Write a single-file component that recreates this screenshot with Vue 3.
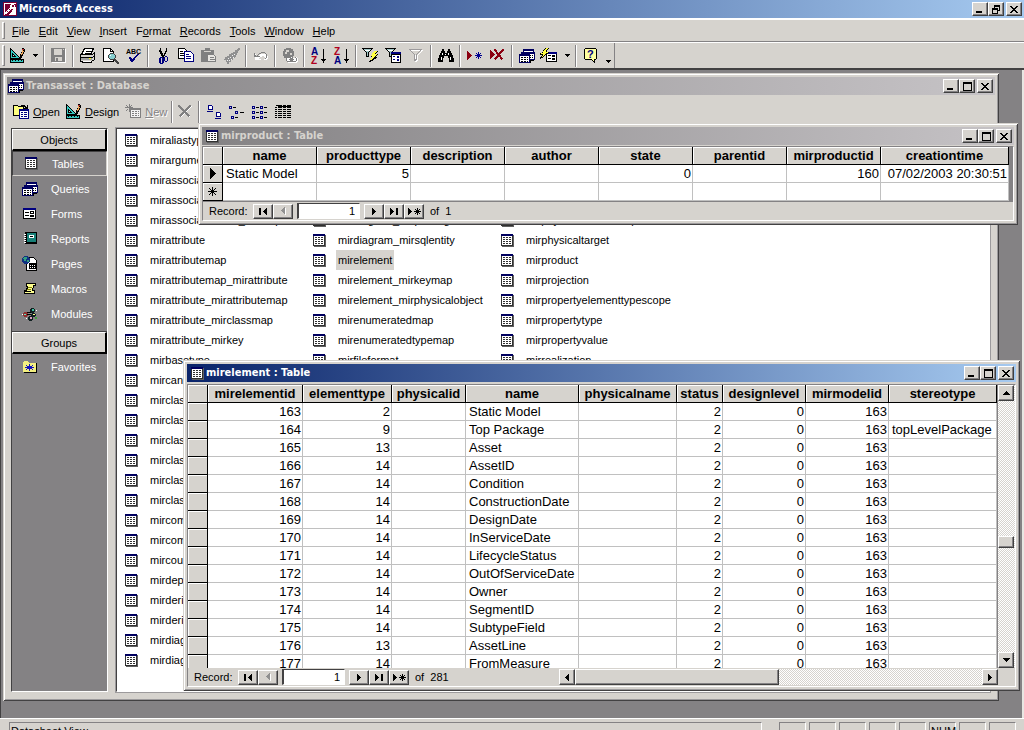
<script setup>
import { h } from 'vue'

const palette = {
  k: '#000000', w: '#ffffff', n: '#000060', d: '#303030', s: '#606060'
}

const tablePixels = [
  'nnnnnnnnnnnn.',
  'nnnnnnnnnnnns',
  'dwwwwwwwwwwds',
  'dwddwddwddwds',
  'dwwwwwwwwwwds',
  'dwddwddwddwds',
  'dwwwwwwwwwwds',
  'dwddwddwddwds',
  'dwwwwwwwwwwds',
  'dwddwddwddwds',
  'dwwwwwwwwwwds',
  'dddddddddddds',
  '.ssssssssssss'
]

const windowsPixels = [
  '....nnnnnnnnnnn.',
  '....nnnnnnnnnnn.',
  '....nwwwwwwwwwn.',
  '..nnnnnnnnnnnnnn',
  '..nnnnnnnnnnnnnn',
  'nnnnnnnnnnnwwwwn',
  'nnnnnnnnnnnkwkwn',
  'nwwwwwwwwwnwwwwn',
  'nwkkwkkwkwnkwkwn',
  'nwwwwwwwwwnwwwwn',
  'nwkkwkkwkwnnnnnn',
  'nwwwwwwwwwnkkkk.',
  'nwkkwkkwkwnk....',
  'nnnnnnnnnnnk....'
]

const icons = {
  table: { w: 13, h: 13, px: tablePixels },
  windows: { w: 16, h: 14, px: windowsPixels },
  key: {
    w: 14, h: 14,
    p: [['M0 0H14V14H0Z', '#7b0033'], ['M1 1H13V13H1Z', '#fff'], ['M2 2H13V4L6 13H2Z', '#7b0033'],
      ['M8 2h3v1h1v3h-1v1h-3v1h-1v1h-1v1h-1v1h-1v1h-2v-2h1v-1h1v-1h1v-1h1v-1h1v-3h1z', '#fff'],
      ['M9 3h2v2h-2z', '#7b0033'], ['M6 7h1v1h-1zM4 9h1v1h-1z', '#7b0033']]
  },
  design: {
    w: 16, h: 15,
    p: [['M1 1V11H11Z', '#37c8c0', '#000'], ['M3 6V9H6Z', '#d6d3ce', '#000'],
      ['M0 11H14V15H0Z', '#000'], ['M1 12H13V14H1Z', '#37c8c0'],
      ['M2 12h1v1h-1zM5 12h1v1h-1zM8 12h1v1h-1zM11 12h1v1h-1z', '#000'],
      ['M12 0h2v1h1v3h-1v2h-1v2h-1v2h-2v-4h1v-2h1v-2z', '#000'],
      ['M12 2h1v1h1v1h-1v2h-1v1h-1v-2h1z', '#f0a858'], ['M12 1h2v1h-2z', '#c03030']]
  },
  save: {
    w: 15, h: 15,
    p: [['M1 1H15V15H1Z', '#fff'], ['M0 0H14V14H0Z', '#808080'], ['M3 1H11V7H3Z', '#d6d3ce'],
      ['M4 9H11V13H4Z', '#d6d3ce'], ['M5 10H7V13H5Z', '#808080'], ['M12 1h1v1h-1z', '#d6d3ce']]
  },
  print: {
    w: 16, h: 15,
    p: [['M5 1H14L11 7H2Z', '#fff', '#000'], ['M6 3h5v1h-5zM5 5h5v1h-5z', '#000'],
      ['M1 7H13L15 5V12L12 14H1Z', '#d6d3ce', '#000'], ['M0 9H13V10H0Z', '#000'],
      ['M1 10H12V12H1Z', '#a0a0a0'], ['M9 10h2v1h-2z', '#ffff00'], ['M2 13H12V15H2Z', '#000'], ['M3 13H11V14H3Z', '#fff'],
      ['M13 8h1v1h-1zM14 10h1v1h-1z', '#000']]
  },
  preview: {
    w: 16, h: 16,
    p: [['M1 1H8L11 4V14H1Z', '#fff', '#000'], ['M8 1V4H11', 'none', '#000'],
      ['M7 5h4v1h1v1h1v3h-1v1h-1v1h-4v-1h-1v-1h-1v-3h1v-1h1z', '#404040'],
      ['M7 6h4v1h1v3h-1v1h-4v-1h-1v-3h1z', '#86cfd0'], ['M7 7h1v1h-1z', '#fff'],
      ['M11 11h2v1h1v1h1v1h1v2h-2v-1h-1v-1h-1v-1h-1z', '#404040']]
  },
  spell: {
    w: 16, h: 16, p: [['M3 9h2v1h1v1h1v-1h1v-1h1v-1h1v-1h1v-1h2v1h-1v1h-1v1h-1v1h-1v2h-1v1h-1v1h-2v-1h-1v-2h-1z', '#000080']],
    t: [[0, 6, 7, '#000', 'ABC', 'bold']]
  },
  cut: {
    w: 10, h: 16,
    p: [['M2 0h1v3h1v2h1v2h1v-2h1v-2h1v-3h1v4h-1v2h-1v2h-1v2h-2v-2h-1v-2h-1v-2h-1z', '#000'],
      ['M2 9h3v1h1v5h-1v1h-3v-1h-1v-5h1zM3 10v5h1v-5zM7 8h2v1h1v4h-1v1h-2v-1h-1v-4h1zM7 9v4h2v-4z', '#000080']]
  },
  copy: {
    w: 16, h: 15,
    p: [['M1 1H7L9 3V11H1Z', '#fff', '#000'], ['M2 3h3v1h-3zM2 5h4v1h-4zM2 7h4v1h-4z', '#000'],
      ['M7 4H13L16 7V14H7Z', '#fff', '#000080'], ['M8 6h3v1h-3zM8 8h5v1h-5zM8 10h5v1h-5z', '#000080']]
  },
  paste: {
    w: 16, h: 15,
    p: [['M0 2H4V0H9V2H13V14H0Z', '#808080'], ['M3 3h7v1h-7z', '#d6d3ce'],
      ['M7 7H13L15 9V14H7Z', '#e8e6e2', '#808080'], ['M9 9h4v1h-4zM9 11h5v1h-5z', '#808080']]
  },
  brush: {
    w: 16, h: 16,
    p: [['M14 0h2v2h-1v1h-1v2h-1v2h-1v2h-1v1h-2v2h-2v2h-2v2h-2v-2h-1v-2h-2v-1h1v-2h2v-1h2v-2h2v-1h2v-1h2v-2h2z', '#909090'],
      ['M4 10h1v1h-1zM6 9h1v1h-1zM5 12h1v1h-1zM7 11h1v1h-1zM8 7h1v1h-1zM3 12h1v1h-1zM10 6h1v1h-1zM9 9h1v1h-1z', '#f0f0f0']]
  },
  undo: {
    w: 14, h: 10,
    p: [['M1 3v6h6v-1h-2v-1h1v-1h2v-1h2v1h1v2h-1v1h3v-1h1v-3h-1v-1h-1v-1h-6v1h-1v1h-1v1h-1v-1h-1v-2z', '#fff'],
      ['M0 2h1v2h1v1h1v-1h1v-1h1v-1h2v-1h4v1h1v1h1v4h-1v1h-1v-1h1v-4h-1v-1h-4v1h-2v1h-1v1h2v1h-6z', '#808080']]
  },
  globe: {
    w: 16, h: 16,
    p: [['M4 0h5v1h2v2h1v5h-1v2h-2v1h-5v-1h-2v-2h-1v-5h1v-2h2z', '#808080'], ['M4 2h3v2h-2v2h-2v-2h1zM8 5h2v2h-2z', '#d6d3ce'],
      ['M6 9h4v1h3v-1h2v1h1v4h-1v1h-9v-1h-1v-4h1z', '#fff'], ['M5 9h4v1h4v-1h1v1h1v3h-1v1h-9v-1h-1v-3h1zM5 10v3h3v-3zM11 10v3h3v-3z', '#808080'],
      ['M7 11h5v1h-5z', '#808080']]
  },
  az: { w: 16, h: 16, p: [['M12 1h1v10h2v1h-1v1h-1v2h-1v-2h-1v-1h-1v-1h2z', '#000']], t: [[0, 7, 10, '#000080', 'A', 'bold'], [0, 16, 10, '#b00020', 'Z', 'bold']] },
  za: { w: 16, h: 16, p: [['M12 1h1v10h2v1h-1v1h-1v2h-1v-2h-1v-1h-1v-1h2z', '#000']], t: [[0, 7, 10, '#b00020', 'Z', 'bold'], [0, 16, 10, '#000080', 'A', 'bold']] },
  filterBolt: {
    w: 17, h: 16,
    p: [['M1 1H11L7 5V9H5V5Z', '#9fc4c4', '#000'], ['M3 2h5v1h-5z', '#fff'],
      ['M12 3h4v1h-1v1h-1v1h2v1h-1v1h-1v1h1v1h-1v1h-2v1h-1v1h-2v1h-2v-1h1v-2h1v-1h1v-1h-1v-2h1v-2h1z', '#000'],
      ['M12 3h3v1h-1v1h-1v1h2v1h-1v1h-1v1h-1v1h-1v1h-1v1h-2v-1h1v-1h1v-2h-1v-1h1v-2h1z', '#ffff40']]
  },
  filterForm: {
    w: 17, h: 16,
    p: [['M1 1H11L7 5V9H5V5Z', '#9fc4c4', '#000'], ['M3 2h5v1h-5z', '#fff'], ['M6 4H16V15H6Z', '#000'], ['M6 4H16V6H6Z', '#000080'],
      ['M7 7H15V14H7Z', '#fff'], ['M8 8h2v1h-2zM8 11h2v1h-2zM12 8h2v2h-2zM12 11h2v2h-2z', '#000080']]
  },
  funnel: {
    w: 15, h: 14, p: [['M2 2H14L9 7V12L7 13V7Z', 'none', '#fff'], ['M1 1H13L8 6V11L6 12V6Z', 'none', '#9c9a9c']]
  },
  find: {
    w: 16, h: 15,
    p: [['M4 1h2v2h1v2h2v-2h1v-2h2v2h1v2h1v2h1v3h1v4h-5v-4h-1v-2h-4v2h-1v4h-5v-4h1v-3h1v-2h1v-2h1z', '#000'],
      ['M4 5h1v2h-1zM3 9h1v3h-1zM10 5h1v2h-1zM12 9h1v3h-1zM7 6h1v1h-1z', '#fff']]
  },
  newRecord: {
    w: 15, h: 11,
    p: [['M0 1h1v1h1v1h1v1h1v1h1v1h-1v1h-1v1h-1v1h-1v1h-1z', '#8b0010'],
      ['M11 2h1v3h3v1h-3v3h-1v-3h-3v-1h3zM9 3h1v1h-1zM13 3h1v1h-1zM9 7h1v1h-1zM13 7h1v1h-1zM10 4h1v1h-1zM12 4h1v1h-1zM10 6h1v1h-1zM12 6h1v1h-1z', '#000090']]
  },
  deleteRecord: {
    w: 16, h: 13,
    p: [['M0 1h1v1h1v1h1v1h1v1h1v1h-1v1h-1v1h-1v1h-1v1h-1z', '#8b0010'], ['M5 1L13 11M14 1L5 11', 'none', '#8b0010', 2]]
  },
  newObject: {
    w: 17, h: 15,
    p: [['M5 4H16V14H5Z', '#000'], ['M6 6H15V13H6Z', '#fff'], ['M5 4H16V6H5Z', '#000080'], ['M7 7h3v1h-3zM7 10h3v1h-3zM11 7h3v2h-3zM11 10h3v2h-3z', '#000'],
      ['M4 0h4v1h-1v1h-1v2h2v1h-1v1h-1v1h-2v1h-1v1h-1v1h-2v1h-1v-2h1v-1h1v-1h-2v-2h2v-1h1v-2h1z', '#000'],
      ['M5 0h2v1h-1v1h-1v2h2v1h-2v1h-1v1h-1v1h-1v1h-1v-1h1v-2h-2v-1h2v-2h1v-1h1z', '#ffff40']]
  },
  help: {
    w: 14, h: 16, p: [['M2 1H12L13 2V11L12 12H11V15L8 12H2L1 11V2Z', '#ffffa0', '#000']], t: [[3, 10, 11, '#000080', '?', 'bold']]
  },
  open: {
    w: 17, h: 16,
    p: [['M1 2H5L6 3H11V12H1Z', '#ffff80', '#000'], ['M8 1h4v1h1v1h1v-2h1v4h-4v-1h1v-1h-1v-1h-3z', '#000'], ['M6 5H16V15H6Z', '#000080'], ['M7 7H15V14H7Z', '#fff'],
      ['M8 8h2v1h-2zM11 8h3v1h-3zM8 10h2v1h-2zM11 10h3v1h-3zM8 12h2v1h-2zM11 12h3v1h-3z', '#000080']]
  },
  newTable: {
    w: 17, h: 15,
    p: [['M5 4H16V14H5Z', '#808080'], ['M6 6H15V13H6Z', '#f4f4f4'], ['M7 7h2v1h-2zM10 7h2v1h-2zM13 7h1v1h-1zM7 9h2v1h-2zM10 9h2v1h-2zM13 9h1v1h-1zM7 11h2v1h-2zM10 11h2v1h-2zM13 11h1v1h-1z', '#808080'],
      ['M4 0h1v3h3v1h-3v4h-1v-4h-4v-1h4zM1 1h1v1h-1zM2 2h1v1h-1zM7 1h-1v1h1zM6 2h-1v1h1zM2 5h1v1h-1zM1 6h1v1h-1z', '#808080']]
  },
  remove: { w: 15, h: 14, p: [['M2 2L13 13M14 2L3 13', 'none', '#fff', 1], ['M1 1L12 12M13 1L2 12', 'none', '#808080', 2]] },
  large: { w: 14, h: 14, p: [['M2 1H5L6 2V5H2ZM10 8H13L14 9V12H10Z', '#fff', '#000080'], ['M0 6h6v1h-6zM8 13h6v1h-6z', '#000080']] },
  small: {
    w: 15, h: 14,
    p: [['M0 1h3v3h-3zM1 2v1h1v-1zM6 6h3v3h-3zM7 7v1h1v-1zM2 11h3v3h-3zM3 12v1h1v-1z', '#000080'], ['M4 2h3v1h-3zM11 7h4v1h-4zM6 12h3v1h-3z', '#000']]
  },
  list: {
    w: 16, h: 14,
    p: [['M0 1h3v3h-3zM1 2v1h1v-1zM0 6h3v3h-3zM1 7v1h1v-1zM0 11h3v3h-3zM1 12v1h1v-1zM8 1h3v3h-3zM9 2v1h1v-1zM8 6h3v3h-3zM9 7v1h1v-1zM8 11h3v3h-3zM9 12v1h1v-1z', '#000080'],
      ['M4 2h3v1h-3zM4 7h3v1h-3zM4 12h3v1h-3zM12 2h3v1h-3zM12 7h3v1h-3zM12 12h3v1h-3z', '#000']]
  },
  details: {
    w: 16, h: 14,
    p: [0, 2, 4, 6, 8, 10, 12].map(y => [`M${y ? 0 : 1} ${y}h2v1h-2zM3 ${y}h4v1h-4zM8 ${y}h3v1h-3zM12 ${y}h4v1h-4z`, '#000']).concat([['M3 1h13v1h-13z', '#000']])
  },
  form: {
    w: 14, h: 12,
    p: [['M0 0H13V11H0Z', '#000'], ['M0 0H13V2H0Z', '#000080'], ['M1 2H12V10H1Z', '#fff'], ['M2 4h4v1h-4zM2 7h4v1h-4zM7 3h4v3h-4zM7 7h4v2h-4z', '#000'], ['M8 4h2v1h-2z', '#fff']]
  },
  report: {
    w: 13, h: 13,
    p: [['M1 0H13V12H1Z', '#000'], ['M3 1H12V10H3Z', '#188078'], ['M0 2h2v1h-2zM0 4h2v1h-2zM0 6h2v1h-2zM0 8h2v1h-2zM0 10h2v1h-2z', '#fff'], ['M5 3h5v3h-5z', '#fff'], ['M6 4h3v1h-3z', '#000']]
  },
  page: {
    w: 16, h: 16,
    p: [['M5 2H12L15 5V15H5Z', '#fff', '#000'], ['M7 7H14V13H7Z', '#000'], ['M8 9h1v1h-1zM10 9h1v1h-1zM12 9h1v1h-1zM8 11h1v1h-1zM10 11h1v1h-1zM12 11h1v1h-1z', '#fff'],
      ['M2 0h4v1h1v1h1v4h-1v1h-1v1h-4v-1h-1v-1h-1v-4h1v-1h1z', '#103080'], ['M2 1h3v2h-1v2h-2v-2h-1v-1h1zM5 4h2v2h-2z', '#30a080']]
  },
  macro: {
    w: 12, h: 12,
    p: [['M3 1H12V3H10L9 8H11V11H1V8H3L4 4H3Z', '#ffff90', '#000'], ['M4 4h4v1h-4zM3 6h4v1h-4z', '#808000'], ['M1 8h6v1h-6z', '#000']]
  },
  module: {
    w: 16, h: 14,
    p: [['M2 5h3v1h1v3h-1v1h-3v-1h-1v-3h1z', '#903030'], ['M9 1h3v1h1v3h-1v1h-3v-1h-1v-3h1z', '#102020'], ['M10 2h2v2h-2z', '#40c0a0'],
      ['M10 6h3v1h1v2h-1v1h-3v-1h-1v-2h1z', '#102020'], ['M11 7h2v1h-2z', '#ffff80'], ['M7 9h3v1h1v3h-1v1h-3v-1h-1v-3h1z', '#102020'], ['M8 10h2v2h-2z', '#e0a0c0'],
      ['M5 7h4v1h-4zM5 5h4v1h-4z', '#000'], ['M2 7h2v1h-2z', '#60e0c0'], ['M0 7h1v1h-1zM14 3h1v1h-1zM4 11h1v1h-1z', '#fff'], ['M13 10h2v2h-2z', '#40a040']]
  },
  favorite: {
    w: 14, h: 12,
    p: [['M1 1H5L6 2H14V12H1Z', '#000'], ['M0 1h1v-1h4v1h1v1h7v9h-13z', '#f4f080'], ['M6 3h1v2h2v-1h1v1h-1v1h2v1h-2v1h1v1h-1v-1h-2v2h-1v-2h-2v1h-1v-1h1v-1h-2v-1h2v-1h-1v-1h1v1h2z', '#1010c0']]
  },
  min: { w: 8, h: 8, p: [['M0 6h6v2h-6z', '#000']] },
  max: { w: 9, h: 9, p: [['M0 0h9v9h-9zM1 2v6h7v-6z', '#000']] },
  restore: { w: 8, h: 9, p: [['M2 0h6v6h-2v3h-6v-6h2zM3 2v1h3v2h1v-3zM1 5v3h4v-3z', '#000']] },
  close: { w: 8, h: 7, p: [['M0 0h2v1h1v1h2v-1h1v-1h2v1h-1v1h-1v1h-1v1h1v1h1v1h1v1h-2v-1h-1v-1h-2v1h-1v1h-2v-1h1v-1h1v-1h1v-1h-1v-1h-1v-1h-1z', '#000']] },
  down: { w: 5, h: 3, p: [['M0 0h5v1h-1v1h-1v1h-1v-1h-1v-1h-1z', '#000']] },
  upArrow: { w: 7, h: 4, p: [['M3 0h1v1h1v1h1v1h1v1h-7v-1h1v-1h1v-1h1z', '#000']] },
  downArrow: { w: 7, h: 4, p: [['M0 0h7v1h-1v1h-1v1h-1v1h-1v-1h-1v-1h-1v-1h-1z', '#000']] },
  leftArrow: { w: 4, h: 7, p: [['M4 0v7h-1v-1h-1v-1h-1v-1h-1v-1h1v-1h1v-1h1v-1z', '#000']] },
  prev: { w: 5, h: 8, p: [['M5 1v7h-1v-1h-1v-1h-1v-1h-1v-1h1v-1h1v-1h1v-1z', '#fff'], ['M4 0v7h-1v-1h-1v-1h-1v-1h-1v-1h1v-1h1v-1h1v-1z', '#909090']] },
  next: { w: 4, h: 7, p: [['M0 0h1v1h1v1h1v1h1v1h-1v1h-1v1h-1v1h-1z', '#000']] },
  first: { w: 9, h: 7, p: [['M0 0h2v7h-2zM8 0v7h-1v-1h-1v-1h-1v-1h-1v-1h1v-1h1v-1h1v-1z', '#000']] },
  last: { w: 9, h: 7, p: [['M0 0h1v1h1v1h1v1h1v1h-1v1h-1v1h-1v1h-1zM6 0h2v7h-2z', '#000']] },
  addNew: { w: 13, h: 7, p: [['M0 0h1v1h1v1h1v1h1v1h-1v1h-1v1h-1v1h-1zM9 0h1v3h3v1h-3v3h-1v-3h-3v-1h3zM7 1h1v1h-1zM8 2h1v1h-1zM11 1h1v1h-1zM10 2h1v1h-1zM8 4h1v1h-1zM7 5h1v1h-1zM10 4h1v1h-1zM11 5h1v1h-1z', '#000']] },
  current: { w: 6, h: 11, p: [['M0 0h1v1h1v1h1v1h1v1h1v1h1v1h-1v1h-1v1h-1v1h-1v1h-1v1h-1z', '#000']] },
  star: { w: 9, h: 9, p: [['M4 0h1v4h4v1h-4v4h-1v-4h-4v-1h4zM1 1h1v1h-1zM2 2h1v1h-1zM3 3h1v1h-1zM7 1h1v1h-1zM6 2h1v1h-1zM5 3h1v1h-1zM3 5h1v1h-1zM2 6h1v1h-1zM1 7h1v1h-1zM5 5h1v1h-1zM6 6h1v1h-1zM7 7h1v1h-1z', '#000']] }
}

function pixelPaths(rows) {
  const byColor = {}
  rows.forEach((row, y) => [...row].forEach((c, x) => {
    if (c !== '.') byColor[c] = (byColor[c] || '') + `M${x} ${y}h1v1h-1z`
  }))
  return Object.entries(byColor).map(([c, d]) => [d, palette[c]])
}

const Icon = (props) => {
  const icon = icons[props.name]
  const paths = icon.px ? pixelPaths(icon.px) : icon.p
  return h('svg', { width: icon.w, height: icon.h, viewBox: `0 0 ${icon.w} ${icon.h}`, 'aria-hidden': 'true', 'shape-rendering': 'crispEdges' }, [
    ...paths.map(([d, fill, stroke, sw]) => h('path', {
      d, fill, stroke, 'stroke-width': sw || 1, 'fill-rule': 'evenodd',
      transform: stroke ? 'translate(-0.5 -0.5)' : undefined
    })),
    ...(icon.t || []).map(([x, y, size, fill, text, weight]) => h('text', {
      x, y, fill, 'font-size': size, 'font-weight': weight, 'font-family': '"Liberation Sans", Arial, sans-serif'
    }, text))
  ])
}
Icon.props = ['name']

const menus = [['F', 'ile'], ['E', 'dit'], ['V', 'iew'], ['I', 'nsert'], ['F', 'o', 'rmat'], ['R', 'ecords'], ['T', 'ools'], ['W', 'indow'], ['H', 'elp']]
  .map(m => m.length === 3 ? { pre: m[0], key: m[1], post: m[2] } : { pre: '', key: m[0], post: m[1] })

const tools = [
  [['design', 'View', true]], [['save', 'Save']],
  [['print', 'Print'], ['preview', 'Print Preview'], ['spell', 'Spelling']],
  [['cut', 'Cut'], ['copy', 'Copy'], ['paste', 'Paste'], ['brush', 'Format Painter']],
  [['undo', 'Undo']], [['globe', 'Insert Hyperlink']],
  [['az', 'Sort Ascending'], ['za', 'Sort Descending']],
  [['filterBolt', 'Filter By Selection'], ['filterForm', 'Filter By Form'], ['funnel', 'Apply Filter']],
  [['find', 'Find']],
  [['newRecord', 'New Record'], ['deleteRecord', 'Delete Record']],
  [['windows', 'Database Window'], ['newObject', 'New Object', true]],
  [['help', 'Help']]
]

const viewModes = [['large', 'Large Icons'], ['small', 'Small Icons'], ['list', 'List'], ['details', 'Details']]

const objects = [['table', 'Tables'], ['windows', 'Queries'], ['form', 'Forms'], ['report', 'Reports'], ['page', 'Pages'], ['macro', 'Macros'], ['module', 'Modules']]

const tableColumns = [
  ['miraliastype', 'mirargument', 'mirassociation', 'mirassociationrole', 'mirassociationrole_mirmap', 'mirattribute', 'mirattributemap',
    'mirattributemap_mirattribute', 'mirattribute_mirattributemap', 'mirattribute_mirclassmap', 'mirattribute_mirkey', 'mirbasetype',
    'mircandidatekey', 'mirclass', 'mirclassdiagram', 'mirclassifier', 'mirclassmap', 'mirclasstype', 'mirclass_mirkey', 'mircomponent',
    'mircomment', 'mircounter', 'mirdependency', 'mirderivation', 'mirderivedtype', 'mirdiagram', 'mirdiagram_mirclass'],
  ['mirdiagram_mirjoin', 'mirdiagram_mirkey', 'mirdiagram_mirnote', 'mirdiagram_mirrole', 'mirdiagram_mirpackage', 'mirdiagram_mirsqlentity', 'mirelement',
    'mirelement_mirkeymap', 'mirelement_mirphysicalobject', 'mirenumeratedmap', 'mirenumeratedtypemap', 'mirfileformat'],
  ['mirnote', 'miroperation', 'mirpackage', 'mirparameter', 'mirphysicalrelationship', 'mirphysicaltarget', 'mirproduct', 'mirprojection',
    'mirpropertyelementtypescope', 'mirpropertytype', 'mirpropertyvalue', 'mirrealization']
]

const productCols = [['name', 94], ['producttype', 94], ['description', 94], ['author', 94], ['state', 94], ['parentid', 94], ['mirproductid', 94], ['creationtime', 0]]
const productRow = ['Static Model', '5', '', '', '0', '', '160', '07/02/2003 20:30:51']

const elementCols = [['mirelementid', 95], ['elementtype', 89], ['physicalid', 74], ['name', 113], ['physicalname', 98], ['status', 46], ['designlevel', 83], ['mirmodelid', 83], ['stereotype', 0]]
const elements = [
  [163, 2, 'Static Model'], [164, 9, 'Top Package', 'topLevelPackage'], [165, 13, 'Asset'], [166, 14, 'AssetID'], [167, 14, 'Condition'],
  [168, 14, 'ConstructionDate'], [169, 14, 'DesignDate'], [170, 14, 'InServiceDate'], [171, 14, 'LifecycleStatus'], [172, 14, 'OutOfServiceDate'],
  [173, 14, 'Owner'], [174, 14, 'SegmentID'], [175, 14, 'SubtypeField'], [176, 13, 'AssetLine'], [177, 14, 'FromMeasure']
].map(([id, type, name, stereo = '']) => [id, type, '', name, '', 2, 0, 163, stereo])

const captionButtons = [['min', 'Minimize'], ['max', 'Maximize'], ['close', 'Close']]
const navBefore = [['first', 'First record'], ['prev', 'Previous record']]
const navAfter = [['next', 'Next record'], ['last', 'Last record'], ['addNew', 'New record']]
const statusPanels = ['', '', '', '', '', 'NUM', '', '']
</script>

<template>
  <div class="app">
    <header class="caption active main-caption">
      <Icon name="key" />
      <h1>Microsoft Access</h1>
      <button class="cap-btn" aria-label="Minimize"><Icon name="min" /></button>
      <button class="cap-btn" aria-label="Restore"><Icon name="restore" /></button>
      <button class="cap-btn cap-close" aria-label="Close"><Icon name="close" /></button>
    </header>

    <nav class="menubar">
      <span class="grip"></span>
      <button v-for="m in menus" :key="m.pre + m.key + m.post" class="menu">{{ m.pre }}<u>{{ m.key }}</u>{{ m.post }}</button>
    </nav>

    <div class="toolbar">
      <div class="toolset">
        <span class="grip"></span>
        <template v-for="(group, i) in tools" :key="i">
          <span v-if="i" class="sep"></span>
          <template v-for="t in group" :key="t[0]">
            <button class="tool" :aria-label="t[1]"><Icon :name="t[0]" /></button>
            <button v-if="t[2]" class="drop" :aria-label="t[1] + ' options'"><Icon name="down" /></button>
          </template>
        </template>
        <button class="drop more" aria-label="More buttons"><Icon name="down" /></button>
      </div>
    </div>

    <main class="workspace">
      <section class="window database">
        <header class="caption inactive">
          <Icon name="windows" />
          <h2>Transasset : Database</h2>
          <button v-for="b in captionButtons" :key="b[0]" class="cap-btn" :class="{ 'cap-close': b[0] === 'close' }" :aria-label="b[1]"><Icon :name="b[0]" /></button>
        </header>
        <div class="db-tools">
          <button class="db-tool"><Icon name="open" /><span><u>O</u>pen</span></button>
          <button class="db-tool"><Icon name="design" /><span><u>D</u>esign</span></button>
          <button class="db-tool disabled"><Icon name="newTable" /><span><u>N</u>ew</span></button>
          <span class="sep"></span>
          <button class="db-icon" aria-label="Delete"><Icon name="remove" /></button>
          <span class="sep"></span>
          <button v-for="v in viewModes" :key="v[0]" class="db-view" :aria-label="v[1]"><Icon :name="v[0]" /></button>
        </div>
        <div class="db-body">
          <aside class="sidebar">
            <button class="side-head">Objects</button>
            <div class="side-items objects">
              <button v-for="(o, i) in objects" :key="o[1]" class="side-item" :class="{ selected: i === 0 }">
                <span class="side-icon"><Icon :name="o[0]" /></span>{{ o[1] }}
              </button>
            </div>
            <button class="side-head">Groups</button>
            <div class="side-items">
              <button class="side-item"><span class="side-icon"><Icon name="favorite" /></span>Favorites</button>
            </div>
          </aside>
          <div class="table-list">
            <ul v-for="(col, i) in tableColumns" :key="i">
              <li v-for="name in col" :key="name">
                <Icon name="table" /><span :class="{ picked: name === 'mirelement' }">{{ name }}</span>
              </li>
            </ul>
          </div>
        </div>
      </section>

      <section class="window product">
        <header class="caption inactive">
          <Icon name="table" />
          <h2>mirproduct : Table</h2>
          <button v-for="b in captionButtons" :key="b[0]" class="cap-btn" :class="{ 'cap-close': b[0] === 'close' }" :aria-label="b[1]"><Icon :name="b[0]" /></button>
        </header>
        <div class="sheet">
          <div class="grid-wrap gutter">
            <table>
              <colgroup><col class="sel-col"><col v-for="c in productCols" :key="c[0]" :style="c[1] ? { width: c[1] + 'px' } : null"></colgroup>
              <thead><tr><th></th><th v-for="c in productCols" :key="c[0]">{{ c[0] }}</th></tr></thead>
              <tbody>
                <tr><th><Icon name="current" /></th><td v-for="(v, i) in productRow" :key="i" :class="{ text: i === 0 }">{{ v }}</td></tr>
                <tr><th><Icon name="star" /></th><td v-for="(v, i) in productRow" :key="i"></td></tr>
              </tbody>
            </table>
          </div>
          <div class="recordbar ruled">
            <label for="product-record">Record:</label>
            <button v-for="n in navBefore" :key="n[0]" class="nav" :aria-label="n[1]"><Icon :name="n[0]" /></button>
            <input id="product-record" type="text" value="1">
            <button v-for="n in navAfter" :key="n[0]" class="nav" :aria-label="n[1]"><Icon :name="n[0]" /></button>
            <span class="count">of&nbsp; 1</span>
          </div>
        </div>
      </section>

      <section class="window element">
        <header class="caption active">
          <Icon name="table" />
          <h2>mirelement : Table</h2>
          <button v-for="b in captionButtons" :key="b[0]" class="cap-btn" :class="{ 'cap-close': b[0] === 'close' }" :aria-label="b[1]"><Icon :name="b[0]" /></button>
        </header>
        <div class="sheet">
          <div class="grid-row">
            <div class="grid-wrap">
              <table>
                <colgroup><col class="sel-col"><col v-for="c in elementCols" :key="c[0]" :style="c[1] ? { width: c[1] + 'px' } : null"></colgroup>
                <thead><tr><th></th><th v-for="c in elementCols" :key="c[0]">{{ c[0] }}</th></tr></thead>
                <tbody>
                  <tr v-for="r in elements" :key="r[0]"><th></th><td v-for="(v, i) in r" :key="i" :class="{ text: i === 3 || i === 8 }">{{ v }}</td></tr>
                </tbody>
              </table>
            </div>
            <div class="vscroll">
              <button class="scroll-btn" aria-label="Scroll up"><Icon name="upArrow" /></button>
              <span class="v-before"></span><span class="v-thumb"></span><span class="v-after"></span>
              <button class="scroll-btn" aria-label="Scroll down"><Icon name="downArrow" /></button>
            </div>
          </div>
          <div class="recordbar">
            <label for="element-record">Record:</label>
            <button v-for="n in navBefore" :key="n[0]" class="nav" :aria-label="n[1]"><Icon :name="n[0]" /></button>
            <input id="element-record" type="text" value="1">
            <button v-for="n in navAfter" :key="n[0]" class="nav" :aria-label="n[1]"><Icon :name="n[0]" /></button>
            <span class="count">of&nbsp; 281</span>
            <div class="hscroll">
              <button class="scroll-btn" aria-label="Scroll left"><Icon name="leftArrow" /></button>
              <span class="h-thumb"></span><span class="h-after"></span>
              <button class="scroll-btn" aria-label="Scroll right"><Icon name="next" /></button>
            </div>
          </div>
        </div>
      </section>
    </main>

    <footer class="status">
      <span class="panel view">Datasheet View</span>
      <span v-for="(p, i) in statusPanels" :key="i" class="panel">{{ p }}</span>
    </footer>
  </div>
</template>

<style>
html, body { background: #d6d3ce; }
</style>

<style scoped>
.app {
  --face: #d6d3ce;
  display: flex;
  flex-direction: column;
  height: 100vh;
  overflow: hidden;
  background: var(--face);
  color: #000;
  font: 11px/14px "Liberation Sans", Arial, sans-serif;
}
.app * { box-sizing: border-box; }
svg { flex: none; display: block; overflow: visible; }
button { margin: 0; padding: 0; border: 0; background: none; color: inherit; font: inherit; }
h1, h2 { flex: 1; margin: 0; padding-left: 2px; font: bold 11px/16px "DejaVu Sans Condensed", "DejaVu Sans", sans-serif; white-space: nowrap; }

.caption { display: flex; align-items: center; height: 18px; flex: none; padding: 0 2px 0 4px; }
.active { background: linear-gradient(90deg, #0a246a, #a6caf0); color: #fff; }
.inactive { background: linear-gradient(90deg, #848284, #c6c3c6); color: #d6d3ce; }
.main-caption { padding-left: 3px; }
.database .caption { padding-left: 1px; }
.cap-btn, .nav, .scroll-btn {
  display: flex; align-items: center; justify-content: center; flex: none;
  width: 16px; height: 14px;
  background: var(--face);
  border: 1px solid;
  border-color: #fff #404040 #404040 #fff;
  box-shadow: inset -1px -1px #848284;
}
.cap-close { margin-left: 2px; }

.menubar { display: flex; align-items: center; flex: none; height: 24px; padding: 0 2px; border-top: 2px solid #fff; border-bottom: 1px solid #848284; }
.grip { flex: none; width: 3px; height: 17px; border: 1px solid; border-color: #fff #848284 #848284 #fff; }
.menu { margin-left: 5px; padding: 0 2px; white-space: nowrap; }

.toolbar { display: flex; flex: none; height: 28px; border-top: 1px solid #fff; border-bottom: 2px solid #424142; }
.toolset { display: flex; align-items: center; padding-left: 2px; border-right: 1px solid #848284; }
.toolset .grip { margin-right: 1px; height: 21px; }
.tool { display: flex; align-items: center; justify-content: center; width: 23px; height: 22px; }
.drop { display: flex; align-items: center; justify-content: center; width: 12px; height: 22px; }
.more { align-items: flex-end; padding-bottom: 4px; }
.sep { flex: none; width: 2px; height: 22px; margin: 0 2px; border-left: 1px solid #848284; border-right: 1px solid #fff; }

.workspace { position: relative; flex: 1; min-height: 0; background: #848284; border-left: 1px solid #424142; border-right: 2px solid #e8e6e2; }
.window {
  position: absolute; display: flex; flex-direction: column; padding: 4px;
  background: var(--face);
  border: 0;
  box-shadow: inset 1px 1px var(--face), inset -1px -1px #424142, inset 2px 2px #fff, inset -2px -2px #9c9a9c;
}
.database { left: 2px; right: 23px; top: 3px; bottom: 17px; }
.product { left: 197px; right: 4px; top: 53px; }
.element { left: 182px; right: 2px; top: 290px; bottom: 27px; }

.db-tools { display: flex; align-items: center; flex: none; height: 33px; padding-left: 6px; }
.db-tool { display: flex; align-items: center; gap: 3px; margin-right: 6px; }
.disabled { color: #848284; text-shadow: 1px 1px #fff; }
.db-tools .disabled { margin-right: 2px; }
.db-icon { display: flex; justify-content: center; width: 21px; }
.db-view { display: flex; justify-content: center; width: 23px; }

.db-body { display: flex; flex: 1; min-height: 0; gap: 8px; padding: 0 5px 5px 4px; }
.sidebar { display: flex; flex-direction: column; flex: none; width: 97px; background: #848284; border: 1px solid; border-color: #424142 #fff #fff #424142; }
.side-head { height: 22px; flex: none; background: var(--face); border: 1px solid; border-color: #fff #000 #000 #fff; border-bottom-width: 2px; border-right-width: 2px; }
.side-items { display: flex; flex-direction: column; flex: none; }
.objects { padding-bottom: 5px; border-bottom: 1px solid #424142; }
.side-item { display: flex; align-items: center; height: 25px; color: #fff; text-align: left; }
.side-icon { display: flex; justify-content: center; width: 36px; margin-right: 3px; }
.selected { border: 1px solid; border-color: #424142 #d6d3ce #d6d3ce #424142; }

.table-list { display: flex; flex: 1; min-width: 0; overflow: hidden; padding-top: 1px; background: #fff; border: 1px solid; border-color: #424142 #fff #fff #424142; outline: 1px solid #9c9a9c; outline-offset: 0; }
ul { flex: none; width: 188px; margin: 0; padding: 0 0 0 8px; list-style: none; }
li { display: flex; align-items: center; height: 20px; white-space: nowrap; }
li span { margin-left: 10px; padding: 3px 2px; }
.picked { background: var(--face); }

.sheet { display: flex; flex-direction: column; flex: 1; min-height: 0; margin-top: 2px; border: 1px solid; border-color: #848284 #fff #fff #848284; }
.product .sheet { margin-top: 1px; }
.grid-row { display: flex; flex: 1; min-height: 0; }
.grid-wrap { flex: 1; min-width: 0; min-height: 0; overflow: hidden; }
.grid-row .grid-wrap { border-right: 1px solid #848284; background: #fff; }
.gutter { padding-right: 4px; background: #848284; }
table { width: 100%; table-layout: fixed; border-collapse: separate; border-spacing: 0; background: #fff; font-size: 13px; line-height: 16px; }
.sel-col { width: 20px; }
th, td { height: 18px; padding: 1px 1px 0 2px; overflow: hidden; white-space: nowrap; }
th { padding: 0; background: var(--face); border-right: 1px solid #000; border-bottom: 1px solid #000; box-shadow: inset 1px 1px #fff; font-weight: bold; text-align: center; }
th svg { margin: 0 auto; }
td { border-right: 1px solid #c0c0c0; border-bottom: 1px solid #c0c0c0; text-align: right; }
.text { text-align: left; padding-left: 3px; }

.recordbar { display: flex; align-items: center; flex: none; height: 18px; }
.ruled { height: 19px; border-top: 1px solid #848284; }
.recordbar label { width: 50px; padding-left: 6px; }
.nav { width: 20px; height: 15px; }
.recordbar input { width: 63px; height: 16px; margin: 0 4px; padding: 0 4px; border: 1px solid; border-color: #424142 #fff #fff #424142; border-left-width: 2px; border-radius: 0; background: #fff; color: #000; font: inherit; text-align: right; }
.count { padding-left: 6px; white-space: nowrap; }

.vscroll { display: flex; flex-direction: column; width: 17px; }
.vscroll, .hscroll { background: repeating-conic-gradient(#fff 0 25%, #d6d3ce 0 50%) 0 0 / 2px 2px; }
.scroll-btn { width: 16px; height: 16px; }
.v-before { flex: 137; }
.v-after { flex: 106; }
.v-thumb { height: 12px; width: 16px; }
.v-thumb, .h-thumb { background: var(--face); border: 1px solid; border-color: #fff #404040 #404040 #fff; box-shadow: inset -1px -1px #848284; }
.hscroll { display: flex; flex: 1; margin: 0 17px 0 110px; }
.hscroll .scroll-btn, .h-thumb { height: 16px; }
.h-thumb { flex: 1; }
.h-after { flex: 1; }

.status { display: flex; align-items: flex-start; gap: 3px; flex: none; height: 12px; padding: 3px 8px 0 9px; border-top: 1px solid #fff; overflow: hidden; }
.panel { flex: none; width: 27px; height: 18px; padding: 1px 1px; border: 1px solid; border-color: #848284 #fff #fff #848284; white-space: nowrap; }
.view { flex: 1; margin-right: 14px; }
</style>
